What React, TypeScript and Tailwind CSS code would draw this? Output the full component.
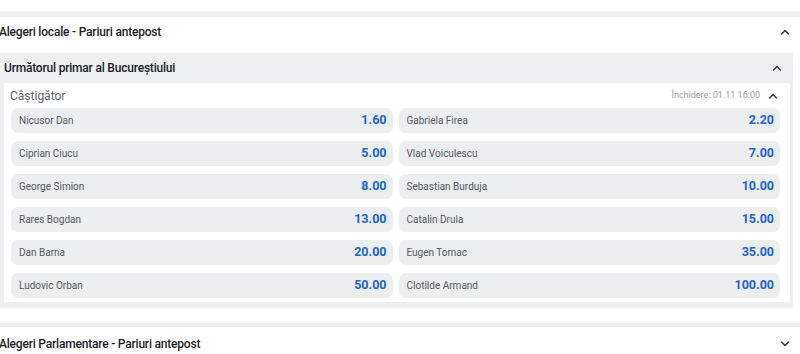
import React from "react";

const left = [
  ["Nicusor Dan", "1.60"],
  ["Ciprian Ciucu", "5.00"],
  ["George Simion", "8.00"],
  ["Rares Bogdan", "13.00"],
  ["Dan Barna", "20.00"],
  ["Ludovic Orban", "50.00"],
];
const right = [
  ["Gabriela Firea", "2.20"],
  ["Vlad Voiculescu", "7.00"],
  ["Sebastian Burduja", "10.00"],
  ["Catalin Drula", "15.00"],
  ["Eugen Tomac", "35.00"],
  ["Clotilde Armand", "100.00"],
];

function Chevron({ up = true, className = "" }: { up?: boolean; className?: string }) {
  return (
    <svg width="10" height="6" viewBox="0 0 10 6" className={className}>
      <path
        d={up ? "M1.5 5 L5 1.5 L8.5 5" : "M1.5 1 L5 4.5 L8.5 1"}
        fill="none"
        stroke="#3c4043"
        strokeWidth="1.6"
        strokeLinecap="round"
        strokeLinejoin="round"
      />
    </svg>
  );
}

function Pill({ name, odd }: { name: string; odd: string }) {
  return (
    <div className="flex h-[25px] items-center justify-between rounded-[7px] bg-[#eceef0] pl-[8px] pr-[6px]">
      <span className="text-[10px] text-[#55585c]">{name}</span>
      <span className="text-[12.5px] font-bold text-[#1d64cc]">{odd}</span>
    </div>
  );
}

export default function App() {
  const rows = left.map((l, i) => [l, right[i]]);
  return (
    <div
      className="w-[800px] h-[354px] overflow-hidden bg-white"
      style={{ fontFamily: "Roboto, 'Noto Sans', sans-serif" }}
    >
      <div className="h-[11px] bg-white" />
      <div className="h-[6px] bg-gradient-to-b from-[#f3f4f6] to-[#e9ebed]" />
      <div className="flex h-[30px] items-center justify-between pr-[10px]">
        <span className="-ml-[1px] text-[12px] font-medium tracking-[-0.2px] text-[#1b1c1f]">
          Alegeri locale - Pariuri antepost
        </span>
        <Chevron up />
      </div>
      <div className="h-[6px]" />
      <div className="mr-[7px] bg-[#edeff1] pb-[6px]">
        <div className="flex h-[30px] items-center justify-between pl-[4px] pr-[11px]">
          <span className="text-[12px] font-medium tracking-[-0.2px] text-[#1b1c1f]">
            Următorul primar al Bucureștiului
          </span>
          <Chevron up />
        </div>
        <div className="ml-[4px] mr-[3px] bg-white pb-[4px] pl-[7px] pr-[10px]">
          <div className="flex h-[25px] items-center justify-between">
            <span className="-ml-[1px] text-[12px] text-[#5f6368]">Câștigător</span>
            <div className="flex items-center gap-[8px] pr-[2px]">
              <span className="text-[9px] text-[#9aa0a6]">Închidere: 01.11 16:00</span>
              <Chevron up />
            </div>
          </div>
          <div className="grid grid-cols-2 gap-x-[6px] gap-y-[8px]">
            {rows.map(([l, r], i) => (
              <React.Fragment key={i}>
                <Pill name={l[0]} odd={l[1]} />
                <Pill name={r[0]} odd={r[1]} />
              </React.Fragment>
            ))}
          </div>
        </div>
      </div>
      <div className="h-[13px]" />
      <div className="h-[6px] bg-gradient-to-b from-[#f3f4f6] to-[#e9ebed]" />
      <div className="flex h-[33px] items-center justify-between pr-[10px]">
        <span className="-ml-[1px] text-[12px] font-medium tracking-[-0.2px] text-[#1b1c1f]">
          Alegeri Parlamentare - Pariuri antepost
        </span>
        <Chevron up={false} />
      </div>
    </div>
  );
}
